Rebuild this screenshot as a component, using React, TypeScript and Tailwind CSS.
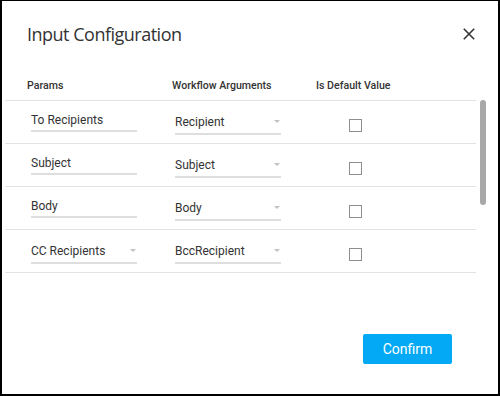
import React from 'react'

type Row = {
  param: string
  paramIsSelect?: boolean
  arg: string
}

const rows: Row[] = [
  { param: 'To Recipients', arg: 'Recipient' },
  { param: 'Subject', arg: 'Subject' },
  { param: 'Body', arg: 'Body' },
  { param: 'CC Recipients', paramIsSelect: true, arg: 'BccRecipient' },
]

const Caret = () => (
  <span className="ml-auto mr-[1px] mt-[-2px] h-0 w-0 border-l-[3px] border-r-[3px] border-t-[3px] border-l-transparent border-r-transparent border-t-[#c2c2c2]" />
)

const TextField = ({ value }: { value: string }) => (
  <div className="mt-[12px] flex w-[106px] items-center border-b-2 border-[#dedede] pb-[3px] text-[12px] leading-[14px] text-[#333]">
    <span>{value}</span>
  </div>
)

const SelectField = ({ value }: { value: string }) => (
  <div className="mt-[14px] flex w-[106px] items-center border-b-2 border-[#dedede] pb-[4px] text-[12px] leading-[14px] text-[#333]">
    <span>{value}</span>
    <Caret />
  </div>
)

export default function App() {
  return (
    <div
      className="flex h-[396px] w-[500px] flex-col border-b-2 border-l-2 border-r-2 border-t border-black bg-white"
      style={{ fontFamily: 'Roboto, "Liberation Sans", sans-serif' }}
    >
      {/* title */}
      <div className="flex items-center justify-between pl-[25px] pr-[23px] pt-[21px]">
        <h2
          className="text-[18px] leading-[24px] tracking-[-0.5px] text-[#333]"
          style={{ fontFamily: '"Open Sans", "Noto Sans", sans-serif' }}
        >
          Input Configuration
        </h2>
        <svg width="12" height="12" viewBox="0 0 12 12" className="text-[#333]">
          <path d="M0.8 0.8 L11.2 11.2 M11.2 0.8 L0.8 11.2" stroke="currentColor" strokeWidth="1.6" fill="none" />
        </svg>
      </div>

      {/* column headers */}
      <div className="mt-[26px] ml-[3px] flex h-[28px] w-[471px] items-center pl-[22px] text-[10.6px] font-medium text-[#333]">
        <span className="w-[145px]">Params</span>
        <span className="w-[144px]">Workflow Arguments</span>
        <span>Is Default Value</span>
      </div>

      {/* rows + scrollbar */}
      <div className="ml-[3px] flex h-[200px]">
        <div className="w-[471px] border-t border-[#e3e3e3]">
          {rows.map((row) => (
            <div key={row.param} className="flex h-[43px] items-start border-b border-[#e3e3e3] pl-[26px]">
              {row.paramIsSelect ? <SelectField value={row.param} /> : <TextField value={row.param} />}
              <div className="ml-[38px]">
                <SelectField value={row.arg} />
              </div>
              <span className="ml-[68px] mt-[18px] h-[13px] w-[13px] border border-[#8e8e8e] bg-white" />
            </div>
          ))}
        </div>
        <div className="ml-[4px] w-[6px]">
          <div className="h-[105px] w-[6px] rounded-full bg-[#a8a8a8]" />
        </div>
      </div>

      {/* footer */}
      <div className="mt-auto flex justify-end pb-[30px] pr-[46px]">
        <button
          type="button"
          className="h-[30px] w-[89px] rounded-[2px] bg-[#03a9f4] text-[14px] text-white"
        >
          Confirm
        </button>
      </div>
    </div>
  )
}
